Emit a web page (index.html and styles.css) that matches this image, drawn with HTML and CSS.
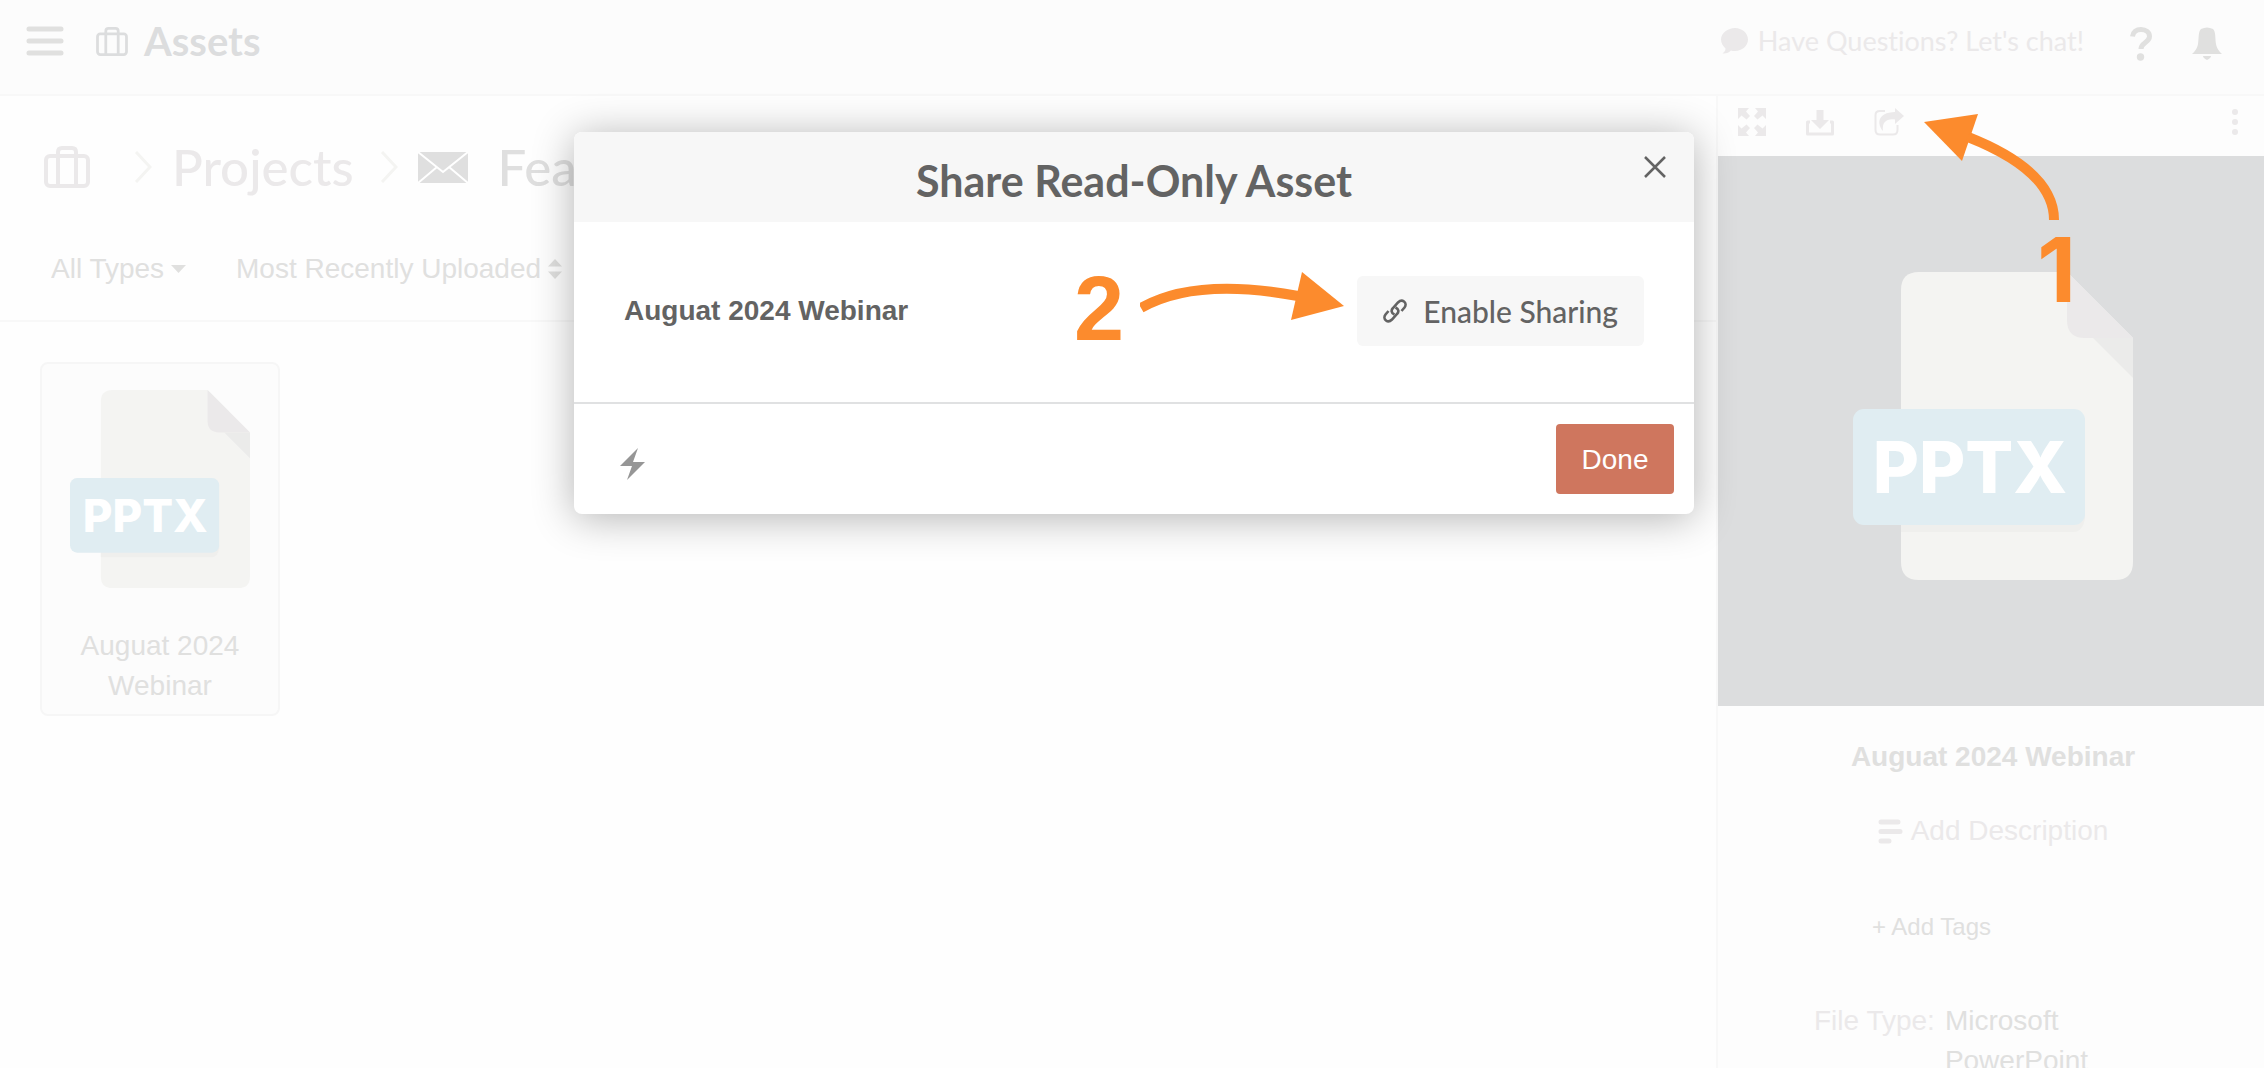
FILE: index.html
```html
<!DOCTYPE html>
<html lang="en">
<head>
    <meta charset="UTF-8">
    <meta name="viewport" content="width=device-width, initial-scale=1.0">
    <title>Assets</title>
    <link rel="stylesheet" href="styles.css">
</head>
<body>
    <!-- shared shapes -->
    <svg class="sprite" aria-hidden="true">
        <symbol id="suitcase" viewBox="0 0 46 42">
            <g fill="none" stroke="currentColor" stroke-width="4">
                <rect x="2" y="10" width="42" height="30" rx="4"/>
                <path d="M14 40V6q0-4 4-4h10q4 0 4 4v34"/>
            </g>
        </symbol>
        <symbol id="file" viewBox="0 0 280 308">
            <path fill="#f4f4f2" d="M66 0h148l66 66v224q0 18-18 18H66q-18 0-18-18V18Q48 0 66 0z"/>
            <path fill="#ebebea" d="M240 66h40v40z"/>
            <path fill="#ebe9ea" d="M214 0l66 66h-48q-18 0-18-18z"/>
            <path fill="#efefed" d="M48 240h184v6q-2 14-12 14H48z"/>
            <rect y="137" width="232" height="116" rx="11" fill="#e0edf2"/>
        </symbol>
    </svg>

    <header class="topbar">
        <button class="icon-button" type="button" aria-label="Menu">
            <svg width="38" height="30" viewBox="0 0 38 30"><path d="M3 3h32M3 15h32M3 27h32" stroke="currentColor" stroke-width="5" stroke-linecap="round"/></svg>
        </button>
        <h1 class="topbar-title">
            <svg width="32" height="29"><use href="#suitcase"/></svg>
            Assets
        </h1>
        <a class="chat-link" href="#">
            <svg width="27" height="26" viewBox="0 0 27 26"><path fill="currentColor" d="M14 0c7 0 13 5 13 11.500S21 23 14 23c-2 0-3 0-4-.5C8 24.500 5 26 1.500 25.500 3.500 24 4.500 22.500 4.500 20.500 2 18 0 15 0 11.500 0 5 7 0 14 0z"/></svg>
            Have Questions? Let's chat!
        </a>
        <button class="icon-button low" type="button" aria-label="Help">
            <svg width="22" height="34" viewBox="0 0 22 34"><path d="M2.500 9.500C3 5 6.500 2.500 11 2.500c5 0 8.500 3 8.500 7 0 6-8.500 6-8.500 12.500" fill="none" stroke="currentColor" stroke-width="5"/><circle cx="10.500" cy="30" r="3.700" fill="currentColor"/></svg>
        </button>
        <button class="icon-button low" type="button" aria-label="Notifications">
            <svg width="30" height="34" viewBox="0 0 30 34"><path fill="currentColor" d="M9 2q6-3 12 0c3 3 2 9 3 15 1 5 3 7 6 10H0c3-3 5-5 6-10C7 11 6 5 9 2zM11 29h8q0 2-4 4-4-2-4-4z"/></svg>
        </button>
    </header>

    <div class="layout">
        <main class="content">
            <nav class="breadcrumb">
                <a class="crumb-home" href="#" aria-label="Assets home"><svg width="46" height="42"><use href="#suitcase"/></svg></a>
                <svg class="chevron" width="18" height="32" viewBox="0 0 18 32"><path d="M2 1l14 15L2 31" fill="none" stroke="currentColor" stroke-width="3"/></svg>
                <a class="crumb" href="#">Projects</a>
                <svg class="chevron" width="18" height="32" viewBox="0 0 18 32"><path d="M2 1l14 15L2 31" fill="none" stroke="currentColor" stroke-width="3"/></svg>
                <span class="crumb current">
                    <svg width="50" height="31" viewBox="0 0 50 31"><path fill="currentColor" d="M0 0h50v31H0z"/><path d="M0 0l25 20L50 0M0 31l19-16M50 31L31 15" fill="none" stroke="#fff" stroke-width="2"/></svg>
                    Fea
                </span>
            </nav>

            <div class="filters">
                <div class="filter">
                    <select aria-label="Type"><option>All Types</option></select>
                    <svg width="15" height="8" viewBox="0 0 15 8"><path fill="currentColor" d="M0 0h15L7.500 8z"/></svg>
                </div>
                <div class="filter">
                    <select aria-label="Sort by"><option>Most Recently Uploaded</option></select>
                    <svg width="14" height="20" viewBox="0 0 14 20"><path fill="currentColor" d="M0 7.500h14L7 0zM0 12.500h14L7 20z"/></svg>
                </div>
            </div>

            <div class="assets">
                <article class="asset-card">
                    <svg width="180" height="198" viewBox="0 0 280 308">
                        <use href="#file"/>
                        <text class="file-ext" x="117" y="221" text-anchor="middle">PPTX</text>
                    </svg>
                    <p>Auguat 2024 Webinar</p>
                </article>
            </div>
        </main>

        <aside class="details">
            <div class="toolbar">
                <button class="icon-button" type="button" aria-label="Full screen">
                    <svg width="28" height="28" viewBox="0 0 28 28"><path fill="currentColor" d="M0 0h11L8 3.500l4 4.500-3.500 3.500-5-4L0 11zM28 0v11l-3.500-3.500-5 4L16 8l4-4.500L17 0zM0 28V17l3.500 3.500 5-4L12 20l-4 4.500L11 28zM28 28H17l3-3.500-4-4.500 3.500-3.500 5 4L28 17z"/></svg>
                </button>
                <button class="icon-button" type="button" aria-label="Download">
                    <svg width="28" height="28" viewBox="0 0 28 28"><path fill="currentColor" d="M10.500 2h7v10H23l-9 9-9-9h5.500z"/><path d="M4 14H1.500v12h25V14H24" fill="none" stroke="currentColor" stroke-width="3" stroke-linejoin="round"/></svg>
                </button>
                <button class="icon-button" type="button" aria-label="Share">
                    <svg width="30" height="28" viewBox="0 0 30 28"><path fill="currentColor" d="M21 0l9 8-9 8v-4.500c-9-1-13 3-12 11.500C3 16 3 4.500 21 4z"/><path d="M11 3H6Q1.500 3 1.500 7v15q0 4.500 4.500 4.500h13q4.500 0 4.500-4.500v-5" fill="none" stroke="currentColor" stroke-width="2"/></svg>
                </button>
                <button class="icon-button more" type="button" aria-label="More">
                    <svg width="6" height="28" viewBox="0 0 6 28"><g fill="currentColor"><circle cx="3" cy="4" r="3"/><circle cx="3" cy="14" r="3"/><circle cx="3" cy="24" r="3"/></g></svg>
                </button>

                <div class="step step-one">
                    <svg width="152" height="114" viewBox="0 0 152 114"><path fill="#fc8b2d" d="M0 11L54 3 38 50z"/><path d="M44 26Q130 60 130 109" fill="none" stroke="#fc8b2d" stroke-width="10"/></svg>
                    <span>1</span>
                </div>
            </div>

            <div class="preview">
                <svg width="280" height="308" viewBox="0 0 280 308">
                    <use href="#file"/>
                    <text class="file-ext" x="117" y="221" text-anchor="middle">PPTX</text>
                </svg>
            </div>

            <div class="info">
                <h2 class="asset-name">Auguat 2024 Webinar</h2>
                <button class="add-description" type="button">
                    <svg width="25" height="25" viewBox="0 0 25 25"><path d="M3 3h17M3 12.500h19M3 22h8" stroke="currentColor" stroke-width="5" stroke-linecap="round"/></svg>
                    Add Description
                </button>
                <button class="add-tags" type="button">+ Add Tags</button>
                <dl class="meta">
                    <dt>File Type:</dt>
                    <dd>Microsoft PowerPoint</dd>
                </dl>
            </div>
        </aside>
    </div>

    <div class="overlay">
        <div class="modal" role="dialog" aria-labelledby="modalTitle">
            <div class="modal-header">
                <h2 id="modalTitle">Share Read-Only Asset</h2>
                <button class="close" type="button" aria-label="Close">
                    <svg width="22" height="22" viewBox="0 0 22 22"><path d="M1 1l20 20M21 1L1 21" stroke="currentColor" stroke-width="2.500"/></svg>
                </button>
            </div>
            <div class="modal-body">
                <strong>Auguat 2024 Webinar</strong>
                <button class="enable" type="button">
                    <svg width="24" height="24" viewBox="0 0 24 24"><g fill="none" stroke="currentColor" stroke-width="2.600"><path d="M11.500 15.500C8 14 8 11 10 9l5-5.500c2-2 4-2.500 6-1s2 4 .5 6L18.500 12"/><path d="M12.500 8.500c3.500 1.500 3.500 4.500 1.500 6.500l-5 5.500c-2 2-4 2.500-6 1s-2-4-.5-6L5.500 12"/></g></svg>
                    Enable Sharing
                </button>
                <div class="step step-two">
                    <span>2</span>
                    <svg width="204" height="50" viewBox="0 0 204 50"><path d="M1 36Q55 5 158 24" fill="none" stroke="#fc8b2d" stroke-width="10"/><path fill="#fc8b2d" d="M162 0l42 34-53 14z"/></svg>
                </div>
            </div>
            <div class="modal-footer">
                <svg class="bolt" width="26" height="32" viewBox="0 0 26 32"><path fill="currentColor" d="M18 0l-5 14h12L7 32l5-14H0z"/></svg>
                <button class="done" type="button">Done</button>
            </div>
        </div>
    </div>
</body>
</html>
```
FILE: styles.css
```css
* {
    box-sizing: border-box;
}

body {
    margin: 0;
    height: 100vh;
    display: flex;
    flex-direction: column;
    overflow: hidden;
    background: #fefefe;
    color: #e0e0df;
    font-family: "Liberation Sans", Arial, sans-serif;
    font-size: 28px;
    line-height: 40px;
    font-variant-ligatures: none;
}

h1, h2, p, dl, dd {
    margin: 0;
}

a {
    color: inherit;
    text-decoration: none;
}

svg {
    display: block;
    flex: none;
}

button, select {
    padding: 0;
    border: none;
    background: none;
    color: inherit;
    font: inherit;
    font-variant-ligatures: none;
    cursor: pointer;
}

.sprite {
    position: absolute;
    width: 0;
    height: 0;
}

.file-ext {
    font-family: Inter, sans-serif;
    font-size: 71px;
    font-weight: 800;
    fill: #fff;
}

/* top bar */
.topbar {
    display: flex;
    align-items: center;
    height: 96px;
    padding: 0 42px 12px 26px;
    border-bottom: 2px solid #f8f8f8;
    background: #fcfcfc;
    font-family: Lato, sans-serif;
    flex: none;
}

.topbar-title {
    display: flex;
    align-items: center;
    gap: 16px;
    margin-left: 32px;
    color: #dcddde;
    font-size: 40px;
    font-weight: 700;
}

.chat-link {
    display: flex;
    align-items: center;
    gap: 10px;
    margin-left: auto;
    margin-right: 46px;
    color: #ebe9ea;
    font-size: 27px;
}

.topbar .low {
    margin-top: 6px;
}

.low + .low {
    margin-left: 40px;
}

/* columns */
.layout {
    flex: 1;
    display: flex;
    min-height: 0;
}

.content {
    flex: 1;
    min-width: 0;
}

.breadcrumb {
    display: flex;
    align-items: center;
    height: 142px;
    padding: 0 44px;
    color: #ebe9ea;
    font-family: Lato, sans-serif;
    font-size: 51px;
    font-weight: 500;
}

.crumb-home {
    margin-right: 44px;
}

.chevron {
    color: #f4f4f2;
}

.crumb {
    margin: 0 26px 0 20px;
}

.current {
    display: flex;
    align-items: center;
    gap: 30px;
    margin-left: 20px;
    color: #dfdfdf;
}

.filters {
    display: flex;
    align-items: flex-start;
    gap: 50px;
    height: 84px;
    padding: 11px 51px;
    border-bottom: 2px solid #f8f8f8;
}

.filter {
    display: flex;
    align-items: center;
    gap: 6px;
}

.filter select {
    appearance: none;
}

.assets {
    display: flex;
    padding: 40px;
}

.asset-card {
    display: flex;
    flex-direction: column;
    align-items: center;
    gap: 38px;
    width: 240px;
    padding: 26px 28px 8px;
    border: 2px solid #f6f6f6;
    border-radius: 8px;
    background: #fcfcfc;
    text-align: center;
}

/* details panel */
.details {
    display: flex;
    flex-direction: column;
    width: 548px;
    border-left: 2px solid #f8f8f8;
    background: #fdfdfd;
}

.toolbar {
    position: relative;
    display: flex;
    align-items: center;
    gap: 40px;
    height: 60px;
    padding: 0 26px 8px 20px;
    color: #ebe9ea;
    flex: none;
}

.more {
    margin-left: auto;
}

.preview {
    display: flex;
    justify-content: center;
    align-items: center;
    height: 550px;
    padding: 0 0 10px 4px;
    background: #dcddde;
    flex: none;
}

.info {
    display: flex;
    flex-direction: column;
    align-items: center;
    padding: 31px 0 0 4px;
}

.asset-name {
    font-size: 28px;
    font-weight: 700;
}

.add-description {
    display: flex;
    align-items: center;
    gap: 8px;
    margin-top: 34px;
    color: #ebe9ea;
}

.add-tags {
    align-self: flex-start;
    margin: 56px 0 0 150px;
    font-size: 24px;
}

.meta {
    display: flex;
    align-self: flex-start;
    gap: 10px;
    margin: 54px 0 0 92px;
}

.meta dt {
    color: #ebe9ea;
}

.meta dd {
    width: 160px;
}

/* numbered steps lie over the page */
.step {
    position: absolute;
    color: #fc8b2d;
    font-size: 90px;
    font-weight: 700;
    line-height: 90px;
}

.step-one {
    top: 15px;
    left: 206px;
    display: flex;
    flex-direction: column;
    align-items: flex-end;
    font-family: Inter, sans-serif;
    z-index: 2;
}

.step-two {
    top: 42px;
    left: 500px;
    display: flex;
    align-items: flex-start;
    gap: 16px;
}

.step-two svg {
    margin-top: 8px;
}

/* modal */
.overlay {
    position: absolute;
    top: 0;
    left: 0;
    right: 0;
    display: flex;
    justify-content: center;
    padding: 132px 0 0 4px;
    color: #636363;
}

.modal {
    width: 1120px;
    border-radius: 8px;
    background: #fff;
    box-shadow: 0 4px 42px rgba(0, 0, 0, 0.3);
}

.modal-header {
    position: relative;
    height: 90px;
    padding-top: 29px;
    border-radius: 8px 8px 0 0;
    background: #f7f7f7;
    text-align: center;
}

.modal-header h2 {
    font-family: Lato, sans-serif;
    font-size: 43px;
    font-weight: 700;
}

.close {
    position: absolute;
    top: 24px;
    right: 28px;
}

.modal-body {
    position: relative;
    display: flex;
    justify-content: space-between;
    align-items: center;
    padding: 54px 50px 56px;
    border-bottom: 2px solid #e0e1e2;
}

.enable {
    display: flex;
    align-items: center;
    gap: 16px;
    height: 70px;
    padding: 0 26px;
    border-radius: 6px;
    background: #f7f7f7;
    font-family: Lato, sans-serif;
    font-size: 30px;
    font-weight: 500;
}

.modal-footer {
    display: flex;
    justify-content: space-between;
    align-items: center;
    padding: 20px 20px 20px 46px;
}

.bolt {
    margin-top: 10px;
    color: #969696;
}

.done {
    width: 118px;
    height: 70px;
    padding-top: 2px;
    border-radius: 4px;
    background: #cf765e;
    color: #fff;
}
```
